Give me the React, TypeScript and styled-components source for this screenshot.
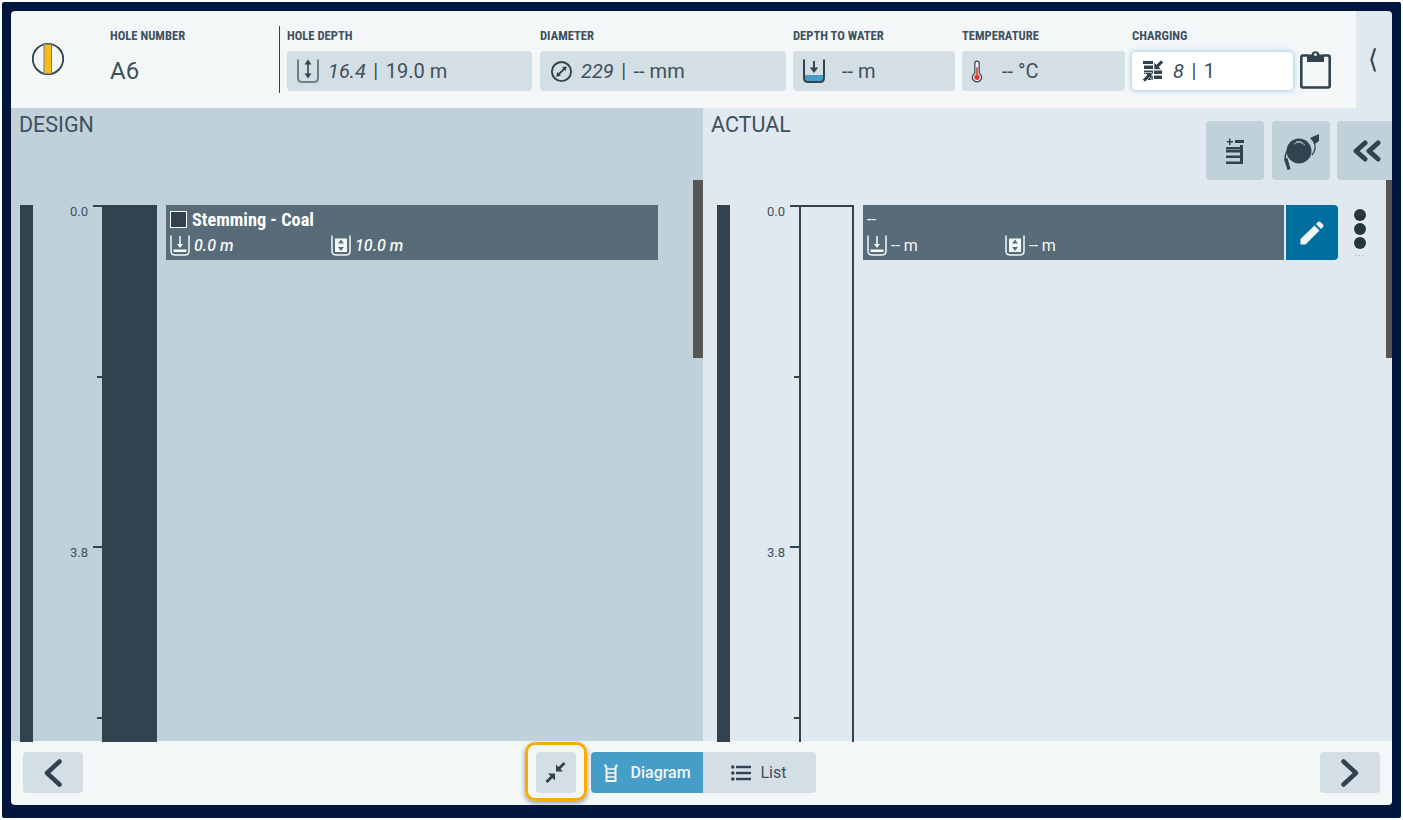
import { createGlobalStyle, styled } from 'styled-components';

const DARK = '#32434f';
const TEXT = '#3f505c';

const GlobalStyle = createGlobalStyle`
  html, body {
    margin: 0;
    padding: 0;
    background: #ffffff;
    font-family: Roboto, "Noto Sans", sans-serif;
    color: ${TEXT};
  }
`;

function HoleIcon() {
  return (
    <svg width="34" height="34" viewBox="0 0 34 34">
      <circle cx="17" cy="17" r="15.2" fill="#f3f7f8" stroke={DARK} strokeWidth="1.8" />
      <rect x="13" y="2.2" width="7.5" height="29.6" fill="#fbbc17" stroke="#6b7f8c" strokeWidth="1" />
    </svg>
  );
}

function Cup({ color, children }: { color: string; children?: React.ReactNode }) {
  return (
    <svg width="24" height="26" viewBox="0 0 24 26" fill="none">
      {children}
      <path d="M2 1.5V20Q2 24 6 24H18Q22 24 22 20V1.5" stroke={color} strokeWidth="2" />
    </svg>
  );
}

function DepthIcon() {
  return (
    <Cup color="#6b7f8c">
      <path d="M12 3V19" stroke={DARK} strokeWidth="1.6" />
      <path d="M12 1.5L15.5 6.5H8.5ZM12 20.5L8.5 15.5H15.5Z" fill={DARK} />
    </Cup>
  );
}

function WaterIcon() {
  return (
    <Cup color={DARK}>
      <rect x="3" y="17" width="18" height="6" fill="#469ec8" />
      <path d="M12 3V11" stroke={DARK} strokeWidth="2" />
      <path d="M12 15L7.8 9.5H16.2Z" fill={DARK} />
    </Cup>
  );
}

function DiameterIcon() {
  return (
    <svg width="23" height="23" viewBox="0 0 24 24" fill="none">
      <circle cx="12" cy="12" r="10" stroke={DARK} strokeWidth="2" />
      <path d="M8 16L16 8" stroke={DARK} strokeWidth="2" />
      <path d="M17.5 6.5L16.5 11.5L12.5 7.5ZM6.5 17.5L7.5 12.5L11.5 16.5Z" fill={DARK} />
    </svg>
  );
}

function ThermoIcon() {
  return (
    <svg width="12" height="25" viewBox="0 0 14 26" fill="none">
      <path d="M4.5 3.5a2.5 2.5 0 0 1 5 0V15a5.4 5.4 0 1 1-5 0Z" fill="#f3f7f8" stroke={DARK} strokeWidth="1.4" />
      <circle cx="7" cy="19.6" r="3.2" fill="#e2382a" />
      <rect x="6.1" y="8" width="1.8" height="11" fill="#e2382a" />
    </svg>
  );
}

function ChargingIcon() {
  return (
    <svg width="22" height="22" viewBox="0 0 22 22" fill={DARK}>
      <path d="M1 1H11V4H1ZM2 5.500H11V9H2ZM2 10.500H11V14H2ZM12 10.500H20V14H12ZM12 15.500H20V19H12ZM6 15.500H11V20H6Z" />
      <path d="M21.500 2.500L17 7L19.500 9.500H12V2L14.500 4.500L19 0Z" stroke="#ffffff" strokeWidth="0.600" />
      <path d="M0.500 19.500L5 15L2.500 12.500H10V20L7.500 17.500L3 22Z" stroke="#ffffff" strokeWidth="0.600" />
    </svg>
  );
}

function ClipboardIcon() {
  return (
    <svg width="31" height="39" viewBox="0 0 31 39" fill="none">
      <path d="M8 5.500H3Q1.300 5.500 1.300 7.200V35.800Q1.300 37.500 3 37.500H28Q29.700 37.500 29.700 35.800V7.200Q29.700 5.500 28 5.500H23" stroke={DARK} strokeWidth="2.600" />
      <path d="M7 12V4.500H11.500A4.100 4.100 0 0 1 19.500 4.500H24V12Z" fill={DARK} />
      <circle cx="15.500" cy="4.600" r="1.500" fill="#f3f7f8" />
    </svg>
  );
}

function StackPlusIcon() {
  return (
    <svg width="22" height="26" viewBox="0 0 22 26" fill={DARK}>
      <path d="M3 3H5V0.500H6.500V3H9V4.500H6.500V7H5V4.500H3ZM11 2H20V5H11Z" />
      <path d="M2 9H16V7H19V26H2V23.500H16V20H2V17.500H16V14.500H2V12H16V11.500H2Z" />
    </svg>
  );
}

function ReelIcon() {
  return (
    <svg width="40" height="40" viewBox="0 0 40 40" fill="none">
      <circle cx="18" cy="20" r="12.500" fill={DARK} />
      <path d="M13 13Q18 9 24 14M15 11Q19 9 22 12" stroke="#c0d1da" strokeWidth="0.800" />
      <path d="M6 20Q3 26 5 30" stroke={DARK} strokeWidth="1.500" />
      <path d="M3 28L6.500 27L9.500 38L6.500 39Z" fill={DARK} />
      <path d="M31 24Q36 18 33 11" stroke={DARK} strokeWidth="1.300" />
      <path d="M29 7L38 3V10L34 13Z" fill={DARK} />
    </svg>
  );
}

function DoubleChevronIcon() {
  return (
    <svg width="28" height="22" viewBox="0 0 28 22" fill="none" stroke={DARK} strokeWidth="5" strokeLinecap="round" strokeLinejoin="round">
      <path d="M12 3L3 11L12 19" />
      <path d="M25 3L16 11L25 19" />
    </svg>
  );
}

function Chevron({ flip }: { flip?: boolean }) {
  return (
    <svg width="18" height="28" viewBox="0 0 18 28" fill="none" stroke={DARK} strokeWidth="4.500" strokeLinecap="round" strokeLinejoin="round">
      <path d={flip ? 'M2.500 2.500L15 14L2.500 25.500' : 'M15.500 2.500L3 14L15.500 25.500'} />
    </svg>
  );
}

function CompressIcon() {
  return (
    <svg width="21" height="21" viewBox="0 0 21 21" fill={DARK}>
      <path d="M18.500 0L20.500 2L15.500 7L18 9.500H11V2.500L13.500 5Z" />
      <path d="M2.500 21L0.500 19L5.500 14L3 11.500H10V18.500L7.500 16Z" />
    </svg>
  );
}

function LadderIcon() {
  return (
    <svg width="14" height="18" viewBox="0 0 14 18" fill="none" stroke="#f3f7f8" strokeWidth="2">
      <path d="M0.500 1Q2.500 2 2.500 4V17H11.500V4Q11.500 2 13.500 1" />
      <path d="M2.500 5H11.500M2.500 9H11.500M2.500 13H11.500" strokeWidth="1.600" />
    </svg>
  );
}

function ListIcon() {
  return (
    <svg width="20" height="16" viewBox="0 0 20 16" fill={DARK}>
      <circle cx="1.800" cy="2" r="1.800" />
      <circle cx="1.800" cy="8" r="1.800" />
      <circle cx="1.800" cy="14" r="1.800" />
      <rect x="5" y="0.800" width="15" height="2.400" />
      <rect x="5" y="6.800" width="15" height="2.400" />
      <rect x="5" y="12.800" width="15" height="2.400" />
    </svg>
  );
}

function PencilIcon() {
  return (
    <svg width="24" height="24" viewBox="0 0 24 24" fill="#f3f7f8">
      <path d="M0.500 23.500V18L14.500 4.500L19.500 9.500L5.500 23.500Z" />
      <path d="M16 3L18 1Q19 0 20.500 1L23 3.500Q24 5 23 6L21 8Z" />
    </svg>
  );
}

function StartDepthIcon() {
  return (
    <svg width="20" height="21" viewBox="0 0 20 21" fill="none" stroke="#f3f7f8">
      <path d="M1 0.500V16Q1 20 5 20H15Q19 20 19 16V0.500" strokeWidth="1.500" />
      <path d="M10 1V10" strokeWidth="1.600" />
      <path d="M10 13L7 9H13Z" fill="#f3f7f8" stroke="none" />
      <rect x="3.500" y="14.500" width="13" height="2.500" fill="#f3f7f8" stroke="none" />
    </svg>
  );
}

function LengthIcon() {
  return (
    <svg width="20" height="21" viewBox="0 0 20 21" fill="none" stroke="#f3f7f8">
      <path d="M1 0.500V16Q1 20 5 20H15Q19 20 19 16V0.500" strokeWidth="1.500" />
      <rect x="4" y="3.500" width="12" height="13.500" fill="#f3f7f8" stroke="none" />
      <path d="M10 4.500L13 8.500H7ZM10 16L7 12H13Z" fill="#586b78" stroke="none" />
    </svg>
  );
}

const TICKS = ['0.0', '', '3.8', ''];

function Ruler() {
  return (
    <RulerTrack>
      {TICKS.map((label, i) => (
        <RulerStep key={i}>
          <RulerLabel>{label}</RulerLabel>
          <RulerTick $major={label !== ''} />
        </RulerStep>
      ))}
    </RulerTrack>
  );
}

export default function App() {
  return (
    <>
      <GlobalStyle />
      <Frame>
        <Card>
          <Header>
            <HeaderMain>
              <HoleBadge>
                <HoleIcon />
              </HoleBadge>
              <HoleNumber>
                <FieldLabel>HOLE NUMBER</FieldLabel>
                <HoleValue>A6</HoleValue>
              </HoleNumber>
              <Divider />
              <Field $width={245} $gap={8}>
                <FieldLabel>HOLE DEPTH</FieldLabel>
                <FieldBox>
                  <IconSlot><DepthIcon /></IconSlot>
                  <Value><em>16.4</em><Sep>|</Sep>19.0 m</Value>
                </FieldBox>
              </Field>
              <Field $width={246}>
                <FieldLabel>DIAMETER</FieldLabel>
                <FieldBox>
                  <IconSlot><DiameterIcon /></IconSlot>
                  <Value><em>229</em><Sep>|</Sep>-- mm</Value>
                </FieldBox>
              </Field>
              <Field $width={162}>
                <FieldLabel>DEPTH TO WATER</FieldLabel>
                <FieldBox>
                  <IconSlot><WaterIcon /></IconSlot>
                  <Value $indent={8}>-- m</Value>
                </FieldBox>
              </Field>
              <Field $width={163}>
                <FieldLabel>TEMPERATURE</FieldLabel>
                <FieldBox>
                  <IconSlot $width={12}><ThermoIcon /></IconSlot>
                  <Value $indent={11}>-- °C</Value>
                </FieldBox>
              </Field>
              <Field $width={161}>
                <FieldLabel>CHARGING</FieldLabel>
                <FieldBox $active>
                  <IconSlot><ChargingIcon /></IconSlot>
                  <Value><em>8</em><Sep>|</Sep>1</Value>
                </FieldBox>
              </Field>
              <ClipboardSlot>
                <ClipboardIcon />
              </ClipboardSlot>
            </HeaderMain>
            <HeaderSide>⟨</HeaderSide>
          </Header>

          <Columns>
            <DesignPanel>
              <PanelHead>
                <PanelTitle>DESIGN</PanelTitle>
              </PanelHead>
              <PanelBody $left={9}>
                <Strip />
                <Ruler />
                <SolidColumn />
                <RowArea>
                  <DeckRow $width={492}>
                    <DeckMain>
                      <DeckTitle>
                        <Swatch />
                        Stemming - Coal
                      </DeckTitle>
                      <DeckStats>
                        <Stat $width={161} $strong><StartDepthIcon /><em>0.0 m</em></Stat>
                        <Stat $strong><LengthIcon /><em>10.0 m</em></Stat>
                      </DeckStats>
                    </DeckMain>
                  </DeckRow>
                </RowArea>
              </PanelBody>
              <Scrollbar $width={10} />
            </DesignPanel>

            <ActualPanel>
              <PanelHead>
                <PanelTitle>ACTUAL</PanelTitle>
                <ToolButtons>
                  <ToolButton><StackPlusIcon /></ToolButton>
                  <ToolButton><ReelIcon /></ToolButton>
                  <ToolButton $edge><DoubleChevronIcon /></ToolButton>
                </ToolButtons>
              </PanelHead>
              <PanelBody $left={14}>
                <Strip />
                <Ruler />
                <HollowColumn />
                <RowArea>
                  <DeckRow $width={475}>
                    <DeckMain>
                      <DeckTitle $plain>--</DeckTitle>
                      <DeckStats>
                        <Stat $width={138}><StartDepthIcon />-- m</Stat>
                        <Stat><LengthIcon />-- m</Stat>
                      </DeckStats>
                    </DeckMain>
                    <EditButton><PencilIcon /></EditButton>
                  </DeckRow>
                  <MoreMenu>
                    <Dot />
                    <Dot />
                    <Dot />
                    <MoreHint>...</MoreHint>
                  </MoreMenu>
                </RowArea>
              </PanelBody>
              <Scrollbar $width={6} />
            </ActualPanel>
          </Columns>

          <Footer>
            <NavButton><Chevron /></NavButton>
            <FooterCenter>
              <FocusRing>
                <CompactButton><CompressIcon /></CompactButton>
              </FocusRing>
              <ViewToggle>
                <ViewOption $active>
                  <LadderIcon />
                  Diagram
                </ViewOption>
                <ViewOption>
                  <ListIcon />
                  List
                </ViewOption>
              </ViewToggle>
            </FooterCenter>
            <NavButton><Chevron flip /></NavButton>
          </Footer>
        </Card>
      </Frame>
    </>
  );
}

const Frame = styled.div`
  box-sizing: border-box;
  width: 1399px;
  height: 816px;
  margin: 2px;
  padding: 9px 9px 13px;
  background: #00163d;
  border-radius: 2px;
  overflow: hidden;
`;

const Card = styled.div`
  display: flex;
  flex-direction: column;
  height: 794px;
  border-radius: 4px;
  overflow: hidden;
`;

const Header = styled.header`
  display: flex;
  flex: 0 0 97px;
`;

const HeaderMain = styled.div`
  display: flex;
  flex: 0 0 1345px;
  background: #f3f7f8;
`;

const HeaderSide = styled.div`
  flex: 1;
  padding-right: 3px;
  background: #e1e9f0;
  text-align: center;
  font-size: 26px;
  line-height: 97px;
  color: ${DARK};
`;

const HoleBadge = styled.div`
  flex: 0 0 99px;
  padding: 31px 0 0 20px;
  box-sizing: border-box;
`;

const HoleNumber = styled.div`
  flex: 0 0 169px;
  padding-top: 18px;
`;

const FieldLabel = styled.div`
  height: 22px;
  font-size: 12.6px;
  font-stretch: 87%;
  line-height: 13px;
  font-weight: 700;
  color: ${TEXT};
  white-space: nowrap;
`;

const HoleValue = styled.div`
  padding-top: 5px;
  font-size: 24px;
  line-height: 30px;
  color: ${TEXT};
`;

const Divider = styled.div`
  flex: 0 0 1px;
  height: 67px;
  margin: 15px 7px 0 0;
  background: ${DARK};
`;

const Field = styled.div<{ $width: number; $gap?: number }>`
  flex: 0 0 ${(p) => p.$width}px;
  margin-right: ${(p) => p.$gap ?? 7}px;
  padding-top: 18px;
`;

const FieldBox = styled.div<{ $active?: boolean }>`
  display: flex;
  align-items: center;
  box-sizing: border-box;
  height: ${(p) => (p.$active ? '38px' : '40px')};
  margin-top: ${(p) => (p.$active ? '1px' : '0')};
  padding-left: 9px;
  border-radius: 4px;
  background: ${(p) => (p.$active ? '#ffffff' : '#d3dee5')};
  box-shadow: ${(p) => (p.$active ? '0 0 5px 1px #a4cde3' : 'none')};
`;

const IconSlot = styled.span<{ $width?: number }>`
  display: flex;
  flex: 0 0 ${(p) => p.$width ?? 24}px;
  justify-content: center;
`;

const Value = styled.span<{ $indent?: number }>`
  margin-left: ${(p) => 8 + (p.$indent ?? 0)}px;
  font-size: 20px;
  line-height: 24px;
  color: ${TEXT};
  white-space: nowrap;
`;

const Sep = styled.span`
  margin: 0 7.5px;
`;

const ClipboardSlot = styled.div`
  margin-top: 39px;
`;

const Columns = styled.div`
  display: flex;
  flex: 1;
  min-height: 0;
`;

const Panel = styled.section`
  position: relative;
  display: flex;
  flex-direction: column;
`;

const DesignPanel = styled(Panel)`
  flex: 0 0 692px;
  background: #c0d1da;
`;

const ActualPanel = styled(Panel)`
  flex: 1;
  background: #e1e9f0;
`;

const PanelHead = styled.div`
  display: flex;
  justify-content: space-between;
  flex: 0 0 97px;
  padding-left: 8px;
`;

const PanelTitle = styled.h2`
  margin: 4px 0 0;
  font-size: 21.5px;
  line-height: 26px;
  font-weight: 400;
  color: ${TEXT};
`;

const ToolButtons = styled.div`
  display: flex;
  gap: 8px;
  padding-top: 13px;
`;

const ToolButton = styled.button<{ $edge?: boolean }>`
  display: flex;
  align-items: center;
  justify-content: center;
  width: ${(p) => (p.$edge ? '55px' : '58px')};
  height: 59px;
  margin-left: ${(p) => (p.$edge ? '-1px' : '0')};
  padding: ${(p) => (p.$edge ? '0 0 0 4px' : '0')};
  border: 0;
  border-radius: ${(p) => (p.$edge ? '4px 0 0 4px' : '4px')};
  background: #c0d1da;
`;

const PanelBody = styled.div<{ $left: number }>`
  display: flex;
  flex: 1;
  min-height: 0;
  padding-left: ${(p) => p.$left}px;
`;

const Strip = styled.div`
  position: relative;
  z-index: 1;
  flex: 0 0 13px;
  margin-bottom: -1px;
  background: ${DARK};
`;

const RulerTrack = styled.div`
  display: flex;
  flex: 0 0 69px;
  flex-direction: column;
  overflow: hidden;
`;

const RulerStep = styled.div`
  display: flex;
  flex: 0 0 170.5px;
  justify-content: flex-end;
`;

const RulerLabel = styled.span`
  margin-right: 5px;
  font-size: 13px;
  line-height: 14px;
  color: ${TEXT};
`;

const RulerTick = styled.span<{ $major: boolean }>`
  flex: 0 0 ${(p) => (p.$major ? '9px' : '5px')};
  height: 2px;
  background: ${DARK};
`;

const SolidColumn = styled.div`
  position: relative;
  z-index: 1;
  flex: 0 0 55px;
  margin-bottom: -1px;
  background: ${DARK};
`;

const HollowColumn = styled.div`
  position: relative;
  z-index: 1;
  box-sizing: border-box;
  flex: 0 0 55px;
  margin-bottom: -1px;
  border: 2px solid ${DARK};
  border-bottom: 0;
`;

const RowArea = styled.div`
  display: flex;
  flex: 1;
  align-items: flex-start;
  padding-left: 9px;
`;

const DeckRow = styled.div<{ $width: number }>`
  display: flex;
  flex: 0 0 ${(p) => p.$width}px;
  height: 55px;
  gap: 2px;
`;

const DeckMain = styled.div`
  flex: 1;
  box-sizing: border-box;
  padding: 4px 0 0 4px;
  background: #586b78;
  color: #f3f7f8;
`;

const DeckTitle = styled.div<{ $plain?: boolean }>`
  display: flex;
  align-items: center;
  gap: 5px;
  height: 20px;
  font-size: ${(p) => (p.$plain ? '16px' : '18.3px')};
  font-stretch: ${(p) => (p.$plain ? '100%' : '87%')};
  font-weight: ${(p) => (p.$plain ? 400 : 700)};
  color: #ffffff;
`;

const Swatch = styled.span`
  box-sizing: border-box;
  width: 17px;
  height: 17px;
  border: 1px solid #ffffff;
  background: ${DARK};
`;

const DeckStats = styled.div`
  display: flex;
  margin-top: 6px;
`;

const Stat = styled.div<{ $width?: number; $strong?: boolean }>`
  display: flex;
  flex: 0 0 ${(p) => p.$width ?? 120}px;
  align-items: center;
  gap: 4px;
  font-size: 16px;
  font-weight: ${(p) => (p.$strong ? 500 : 400)};
  line-height: 21px;
`;

const EditButton = styled.button`
  display: flex;
  flex: 0 0 52px;
  align-items: center;
  justify-content: center;
  padding: 0;
  border: 0;
  border-radius: 0 4px 4px 0;
  background: #006f9f;
`;

const MoreMenu = styled.div`
  display: flex;
  flex-direction: column;
  align-items: center;
  gap: 2px;
  margin-left: 16px;
  padding-top: 4px;
  width: 12px;
`;

const Dot = styled.span`
  flex: 0 0 12px;
  width: 12px;
  border-radius: 50%;
  background: #263640;
`;

const MoreHint = styled.span`
  margin-top: -3px;
  font-size: 9px;
  line-height: 10px;
  letter-spacing: 1px;
  color: #7d8a93;
`;

const Scrollbar = styled.div<{ $width: number }>`
  position: absolute;
  top: 72px;
  right: 0;
  width: ${(p) => p.$width}px;
  height: 178px;
  background: #555555;
`;

const Footer = styled.footer`
  display: flex;
  flex: 0 0 64px;
  justify-content: space-between;
  box-sizing: border-box;
  padding: 11px 12px 0;
  background: #f3f7f8;
`;

const NavButton = styled.button`
  display: flex;
  align-items: center;
  justify-content: center;
  width: 60px;
  height: 41px;
  padding: 0;
  border: 0;
  border-radius: 4px;
  background: #d3dee5;
`;

const FooterCenter = styled.div`
  display: flex;
  align-items: flex-start;
  gap: 4px;
  margin-left: -63px;
  margin-top: -10px;
`;

const FocusRing = styled.div`
  box-sizing: border-box;
  width: 62px;
  height: 59px;
  padding: 7px 8px;
  border: 3px solid #f9ab00;
  border-radius: 10px;
  box-shadow: 0 2px 5px rgba(0, 0, 0, 0.4);
`;

const CompactButton = styled.button`
  display: flex;
  align-items: center;
  justify-content: center;
  width: 40px;
  height: 41px;
  padding: 0;
  border: 0;
  border-radius: 4px;
  background: #d3dee5;
`;

const ViewToggle = styled.div`
  display: flex;
  margin-top: 10px;
  border-radius: 4px;
  overflow: hidden;
`;

const ViewOption = styled.div<{ $active?: boolean }>`
  display: flex;
  align-items: center;
  box-sizing: border-box;
  gap: ${(p) => (p.$active ? '13px' : '10px')};
  width: ${(p) => (p.$active ? '112px' : '113px')};
  height: 41px;
  padding-left: ${(p) => (p.$active ? '13px' : '28px')};
  background: ${(p) => (p.$active ? '#469ec8' : '#d3dee5')};
  color: ${(p) => (p.$active ? '#f3f7f8' : TEXT)};
  font-size: 16px;
  font-weight: ${(p) => (p.$active ? 500 : 400)};
`;
